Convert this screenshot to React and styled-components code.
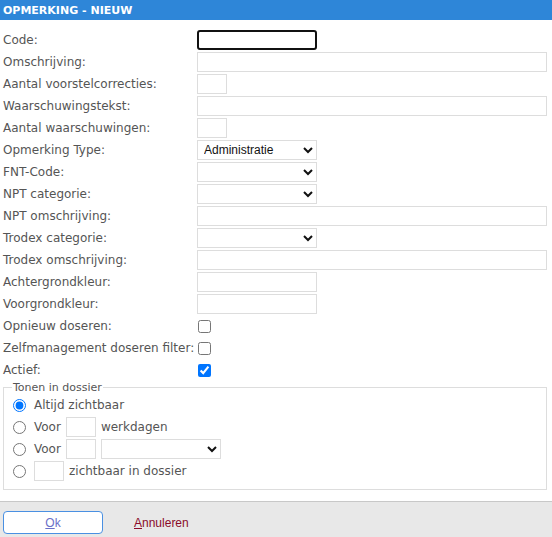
import React from 'react'
import styled, { createGlobalStyle } from 'styled-components'

const GlobalStyle = createGlobalStyle`
	html, body {
		margin: 0;
		padding: 0;
		background: #fff;
	}
	body {
		font-family: "DejaVu Sans", Tahoma, sans-serif;
		font-size: 12px;
		color: #555;
	}
`

const Page = styled.div`
	display: flex;
	flex-direction: column;
	height: 537px;
`

const Header = styled.header`
	height: 20px;
	background: #2e86d8;
	color: #fff;
	font-weight: bold;
	font-size: 11px;
	line-height: 21px;
	padding-left: 3px;
`

const Form = styled.form`
	flex: 1;
	padding: 9px 5px 0 3px;
`

const Row = styled.div`
	display: grid;
	grid-template-columns: 194px 1fr;
	align-items: center;
	height: 22px;
`

const Label = styled.label`
	white-space: nowrap;
`

const TextInput = styled.input`
	box-sizing: border-box;
	height: 20px;
	width: ${p => p.$size === 'full' ? '100%' : p.$size === 'small' ? '30px' : '120px'};
	border: 1px solid #ddd;
	border-radius: 0;
	padding: 0 3px;
	font-family: Arial, "Liberation Sans", sans-serif;
	font-size: 13px;
	outline: none;
	background: #fff;

	&.focused {
		border: 2px solid #111;
		border-radius: 3px;
	}
`

const Select = styled.select`
	box-sizing: border-box;
	height: 20px;
	width: ${p => p.$width || 120}px;
	border: 1px solid #ddd;
	border-radius: 0;
	background: #fff;
	font-family: "Liberation Sans", Arial, sans-serif;
	font-size: 12px;
	color: #111;
	padding: 0 2px;
	outline: none;
`

const Check = styled.input`
	margin: 0 0 0 1px;
	width: 13px;
	height: 13px;
`

const Fieldset = styled.fieldset`
	margin: 0;
	padding: 0 0 7px 7px;
	border: 1px solid #ddd;
	min-width: 0;
`

const Legend = styled.legend`
	padding: 0 1px;
	margin-left: 1px;
	font-size: 11px;
	color: #555;
`

const RadioRow = styled.div`
	display: flex;
	align-items: center;
	gap: 5px;
	height: 22px;
`

const Radio = styled.input`
	margin: 0 3px 0 2px;
	width: 13px;
	height: 13px;
`

const Footer = styled.footer`
	height: 35px;
	border-top: 1px solid #c8c8c8;
	background: #e8e8e8;
	display: flex;
	align-items: center;
	padding-left: 3px;
	gap: 31px;
`

const OkButton = styled.button`
	width: 100px;
	height: 23px;
	margin-top: 6px;
	background: #fff;
	border: 1px solid #4a90e2;
	border-radius: 4px;
	font-family: "Liberation Sans", Arial, sans-serif;
	font-size: 12px;
	color: #6a6fc8;
	cursor: pointer;
`

const CancelLink = styled.a`
	margin-top: 6px;
	font-family: "Liberation Sans", Arial, sans-serif;
	font-size: 12px;
	color: #8a0b2a;
	text-decoration: none;
	cursor: pointer;
`

const Key = styled.span`
	text-decoration: underline;
`

const fields = [
	{ label: 'Omschrijving:', type: 'text', size: 'full' },
	{ label: 'Aantal voorstelcorrecties:', type: 'text', size: 'small' },
	{ label: 'Waarschuwingstekst:', type: 'text', size: 'full' },
	{ label: 'Aantal waarschuwingen:', type: 'text', size: 'small' },
	{ label: 'Opmerking Type:', type: 'select', value: 'Administratie' },
	{ label: 'FNT-Code:', type: 'select' },
	{ label: 'NPT categorie:', type: 'select' },
	{ label: 'NPT omschrijving:', type: 'text', size: 'full' },
	{ label: 'Trodex categorie:', type: 'select' },
	{ label: 'Trodex omschrijving:', type: 'text', size: 'full' },
	{ label: 'Achtergrondkleur:', type: 'text', size: 'medium' },
	{ label: 'Voorgrondkleur:', type: 'text', size: 'medium' },
	{ label: 'Opnieuw doseren:', type: 'check' },
	{ label: 'Zelfmanagement doseren filter:', type: 'check' },
	{ label: 'Actief:', type: 'check', checked: true },
]

const App = () => {
	return (
		<>
		<GlobalStyle/>
		<Page>
			<Header>OPMERKING - NIEUW</Header>
			<Form onSubmit={e => e.preventDefault()}>
				<Row>
					<Label>Code:</Label>
					<TextInput className="focused" $size="medium" autoFocus/>
				</Row>
				{fields.map(f => (
					<Row key={f.label}>
						<Label>{f.label}</Label>
						{f.type === 'text' && <TextInput $size={f.size}/>}
						{f.type === 'select' && (
							<Select defaultValue={f.value || ''}>
								<option value="">{''}</option>
								{f.value && <option value={f.value}>{f.value}</option>}
							</Select>
						)}
						{f.type === 'check' && <Check type="checkbox" defaultChecked={!!f.checked}/>}
					</Row>
				))}
				<Fieldset>
					<Legend>Tonen in dossier</Legend>
					<RadioRow>
						<Radio type="radio" name="tonen" defaultChecked/>
						<span>Altijd zichtbaar</span>
					</RadioRow>
					<RadioRow>
						<Radio type="radio" name="tonen"/>
						<span>Voor</span>
						<TextInput $size="small"/>
						<span>werkdagen</span>
					</RadioRow>
					<RadioRow>
						<Radio type="radio" name="tonen"/>
						<span>Voor</span>
						<TextInput $size="small"/>
						<Select $width={120}>
							<option value=""></option>
						</Select>
					</RadioRow>
					<RadioRow>
						<Radio type="radio" name="tonen"/>
						<TextInput $size="small"/>
						<span>zichtbaar in dossier</span>
					</RadioRow>
				</Fieldset>
			</Form>
			<Footer>
				<OkButton type="button"><Key>O</Key>k</OkButton>
				<CancelLink><Key>A</Key>nnuleren</CancelLink>
			</Footer>
		</Page>
		</>
	)
}

export default App
